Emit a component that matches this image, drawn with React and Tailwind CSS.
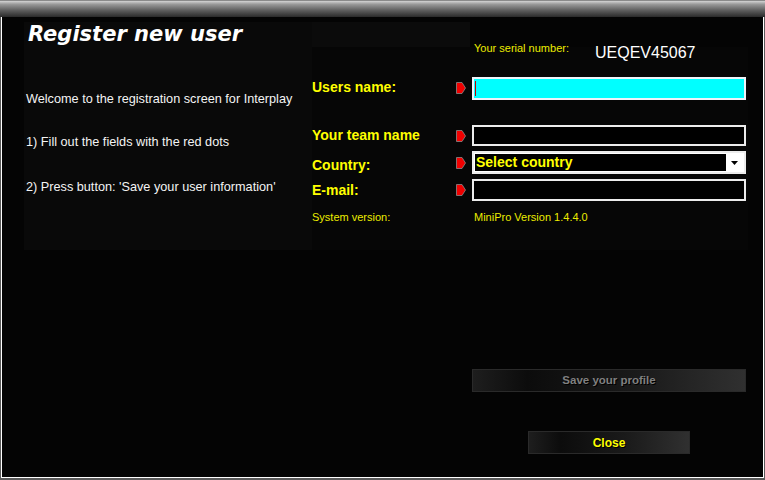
import React from "react";

function Marker() {
  return (
    <svg width="10" height="12" viewBox="0 0 10 12" className="block shrink-0">
      <polygon points="0.5,0.5 6,0.5 9.5,6 6,11.5 0.5,11.5" fill="#f00000" stroke="#8a8a8a" strokeWidth="0.8" />
    </svg>
  );
}

const labelCls = "w-[144px] shrink-0 text-[14px] leading-[16px] font-bold text-[#ffff00] whitespace-nowrap";

export default function App() {
  return (
    <div className="w-[765px] h-[480px] flex flex-col bg-[#5a5a5a] font-['Liberation_Sans',Arial,sans-serif] overflow-hidden">
      <div className="h-[17px] shrink-0 border-t border-[#8a8a8a] bg-[linear-gradient(to_bottom,#d4d4d4,#9a9a9a_20%,#5c5c5c_60%,#2a2a2a)]" />
      <div className="flex-1 mx-px mb-[2px] border-x border-b border-white bg-[#040404] flex flex-col pt-[5px] pl-[22px]">
        <div className="flex h-[228px]">
          {/* Left panel */}
          <div className="w-[288px] shrink-0 bg-[#090909] flex flex-col">
            <div className="h-[25px] pl-[4px] text-[21px] leading-[25px] font-bold italic text-white font-['DejaVu_Sans',Verdana,sans-serif] whitespace-nowrap">
              Register new user
            </div>
            <div className="pl-[2px] text-[12.7px] leading-[14px] text-[#f4f4f4] whitespace-nowrap">
              <p className="mt-[45px]">Welcome to the registration screen for Interplay</p>
              <p className="mt-[29px]">1) Fill out the fields with the red dots</p>
              <p className="mt-[31px]">2) Press button: 'Save your user information'</p>
            </div>
          </div>
          {/* Right column */}
          <div className="w-[436px] shrink-0 flex flex-col">
            <div className="h-[25px] shrink-0 flex">
              <div className="w-[158px] h-full bg-[#0b0b0b]" />
            </div>
            <div className="flex-1 bg-[#060606] flex flex-col">
              {/* Serial */}
              <div className="-mt-[5px] h-[20px] flex items-start whitespace-nowrap">
                <div className="w-[162px] shrink-0" />
                <div className="text-[11px] leading-[13px] text-[#ecec00]">Your serial number:</div>
                <div className="ml-[26px] mt-[1px] text-[16px] leading-[20px] text-white">UEQEV45067</div>
              </div>
              {/* Users name */}
              <div className="mt-[15px] h-[23px] flex items-start">
                <div className={labelCls + " pt-[2px]"}>Users name:</div>
                <div className="mt-[5px]"><Marker /></div>
                <div className="ml-[6px] w-[274px] h-full border-2 border-[#eef4fa] bg-[#00ffff] flex items-center pl-px">
                  <div className="w-px h-[15px] bg-[#c00000]" />
                </div>
              </div>
              {/* Team name */}
              <div className="mt-[25px] h-[21px] flex items-start">
                <div className={labelCls + " pt-[2px]"}>Your team name</div>
                <div className="mt-[5px]"><Marker /></div>
                <div className="ml-[6px] w-[274px] h-full border-2 border-[#ececec] bg-black" />
              </div>
              {/* Country */}
              <div className="mt-[5px] h-[23px] flex items-start">
                <div className={labelCls + " pt-[6px]"}>Country:</div>
                <div className="mt-[6px]"><Marker /></div>
                <div className="ml-[6px] w-[274px] h-full border-2 border-[#ececec] bg-white flex p-px">
                  <div className="w-[251px] h-full bg-black text-[14px] leading-[17px] font-bold text-[#ffff00] pl-[1px] whitespace-nowrap">
                    Select country
                  </div>
                  <div className="flex-1 flex items-center justify-center">
                    <svg width="7" height="4" viewBox="0 0 7 4" className="block">
                      <polygon points="0,0 7,0 3.5,4" fill="#000" />
                    </svg>
                  </div>
                </div>
              </div>
              {/* Email */}
              <div className="mt-[5px] h-[22px] flex items-start">
                <div className={labelCls + " pt-[3px]"}>E-mail:</div>
                <div className="mt-[5px]"><Marker /></div>
                <div className="ml-[6px] w-[274px] h-full border-2 border-[#ececec] bg-black" />
              </div>
              {/* System version */}
              <div className="mt-[10px] flex text-[11px] leading-[13px] text-[#ecec00] whitespace-nowrap">
                <div className="w-[162px] shrink-0">System version:</div>
                <div>MiniPro Version 1.4.4.0</div>
              </div>
            </div>
          </div>
        </div>
        {/* Buttons */}
        <div className="ml-[448px] mt-[119px] w-[274px] flex flex-col items-center">
          <div className="w-full h-[23px] border border-[#2a2a2a] bg-[linear-gradient(to_right,#1e1e1e,#0c0c0c_20%,#1a1a1a_60%,#303030)] flex items-center justify-center text-[11.5px] font-bold text-[#808080] [text-shadow:1px_1px_0_#000]">
            Save your profile
          </div>
          <div className="mt-[39px] w-[162px] h-[23px] border border-[#2a2a2a] bg-[linear-gradient(to_right,#1e1e1e,#0c0c0c_20%,#1a1a1a_60%,#303030)] flex items-center justify-center text-[12px] font-bold text-[#ffff00] [text-shadow:1px_1px_0_#000]">
            Close
          </div>
        </div>
      </div>
    </div>
  );
}
